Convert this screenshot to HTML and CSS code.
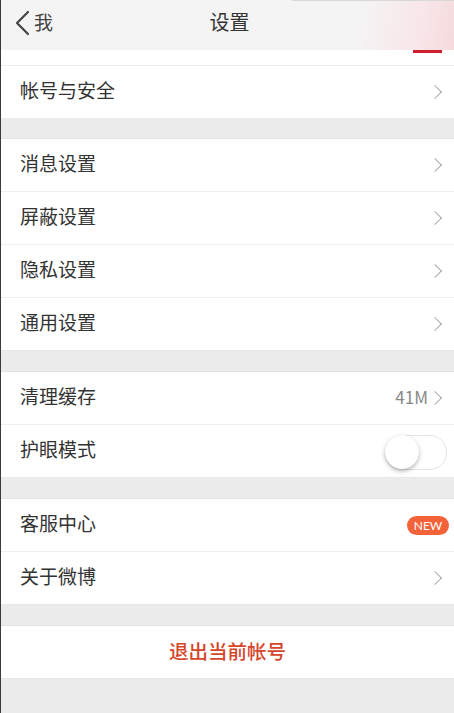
FILE: index.html
```html
<!DOCTYPE html>
<html lang="zh">
<head>
<meta charset="utf-8">
<link rel="stylesheet" href="styles.css">
</head>
<body>
<div class="page">
  <header class="nav">
    <div class="topline"></div>
    <div class="back">
      <svg width="18" height="26" viewBox="0 0 18 26"><path d="M14 2 L3 13 L14 24" fill="none" stroke="#444" stroke-width="2.2" stroke-linecap="round" stroke-linejoin="round"/></svg>
      <span>我</span>
    </div>
    <div class="title">设置</div>
  </header>
  <div class="strip"><span class="redbar"></span></div>

  <section class="group first">
    <div class="row"><span class="label">帐号与安全</span><span class="chev"></span></div>
  </section>

  <section class="group">
    <div class="row"><span class="label">消息设置</span><span class="chev"></span></div>
    <div class="row"><span class="label">屏蔽设置</span><span class="chev"></span></div>
    <div class="row"><span class="label">隐私设置</span><span class="chev"></span></div>
    <div class="row"><span class="label">通用设置</span><span class="chev"></span></div>
  </section>

  <section class="group">
    <div class="row"><span class="label">清理缓存</span><span class="value">41M</span><span class="chev"></span></div>
    <div class="row"><span class="label">护眼模式</span><span class="toggle"><span class="knob"></span></span></div>
  </section>

  <section class="group">
    <div class="row"><span class="label">客服中心</span><span class="badge">NEW</span></div>
    <div class="row"><span class="label">关于微博</span><span class="chev"></span></div>
  </section>

  <section class="group">
    <div class="row logout"><span class="logout-text">退出当前帐号</span></div>
  </section>
</div>
</body>
</html>
```
FILE: styles.css
```css
html, body {
  margin: 0;
  padding: 0;
  background: #ececec;
  font-family: "Noto Sans CJK SC", "Noto Sans", sans-serif;
}
.page {
  width: 454px;
  height: 713px;
  box-sizing: border-box;
  border-left: 1px solid #3a3a3a;
  background: #ececec;
  overflow: hidden;
}
.nav {
  position: relative;
  height: 50px;
  background: linear-gradient(100deg, #f4f4f4 0%, #f4f4f4 78%, #f8e6e8 92%, #f5dadd 100%);
  display: flex;
  align-items: center;
  justify-content: center;
}
.topline {
  position: absolute;
  top: 0;
  left: 291px;
  right: 0;
  height: 1px;
  background: #d8d8d8;
}
.back {
  position: absolute;
  left: 13px;
  top: 8px;
  display: flex;
  align-items: center;
  gap: 2px;
  font-size: 19px;
  color: #444;
}
.back span {
  margin-bottom: 3px;
}
.title {
  font-size: 20px;
  color: #333;
  margin-left: 4px;
  margin-bottom: 7px;
}
.strip {
  height: 15px;
  background: #fff;
  border-bottom: 1px solid #ececec;
  position: relative;
}
.redbar {
  position: absolute;
  left: 412px;
  top: 0;
  width: 29px;
  height: 3px;
  background: #d31f2d;
}
.group {
  background: #fff;
  margin-top: 20px;
  border-top: 1px solid #e2e2e2;
  border-bottom: 1px solid #e8e8e8;
}
.group.first {
  margin-top: 0;
  border-top: none;
  border-bottom: none;
}
.row {
  height: 52px;
  display: flex;
  align-items: center;
  padding: 0 12px 0 19px;
  border-top: 1px solid #f0f0f0;
}
.row:first-child {
  border-top: none;
}
.label {
  font-size: 19px;
  color: #333;
  flex: 1;
  margin-bottom: 5px;
}
.value {
  font-size: 17px;
  color: #888;
  margin-right: 2px;
  margin-bottom: 3px;
}
.chev {
  width: 9px;
  height: 9px;
  border-top: 1.3px solid #aaa;
  border-right: 1.3px solid #aaa;
  transform: rotate(45deg);
  margin-right: 2px;
}
.toggle {
  position: relative;
  width: 60px;
  height: 33px;
  border-radius: 17px;
  border: 1.5px solid #e4e4e4;
  background: #fff;
  margin-right: -5px;
  margin-top: 2px;
}
.knob {
  position: absolute;
  left: -1px;
  top: -1px;
  width: 34px;
  height: 34px;
  border-radius: 50%;
  background: #fff;
  box-shadow: 0 2px 4px rgba(0,0,0,0.3);
}
.badge {
  background: #f4623a;
  color: #fff;
  font-family: "Lato", "Noto Sans", sans-serif;
  font-size: 12px;
  height: 19px;
  line-height: 19px;
  width: 42px;
  text-align: center;
  border-radius: 10px;
  margin-right: -7px;
}
.logout {
  justify-content: center;
  padding: 0;
}
.logout-text {
  font-size: 19.5px;
  color: #d6462a;
  font-weight: 500;
  margin-bottom: 4px;
}
```
